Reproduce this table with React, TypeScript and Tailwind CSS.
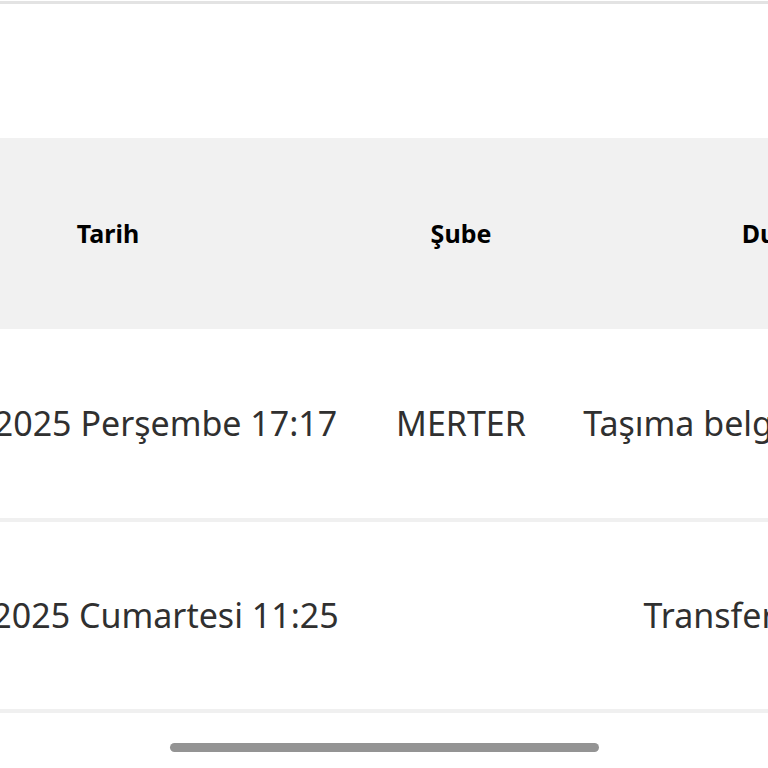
const rows = [
    { date: "10.04.2025 Perşembe 17:17", branch: "MERTER", status: "Taşıma belgesi düzenlendi" },
    { date: "12.04.2025 Cumartesi 11:25", branch: "", status: "Transfer merkezde" },
    { date: "14.04.2025 Pazartesi 09:02", branch: "MERTER", status: "Dağıtıma çıkarıldı" },
];

export default function App() {
    return (
        <div className="relative min-h-[768px] overflow-hidden bg-white font-['Noto_Sans',sans-serif]">
            <div className="mt-px h-[3px] bg-[#e3e3e3]" />

            <div className="mt-[134px] overflow-hidden">
                <table className="-ml-[155px] w-[1174px] table-fixed border-collapse">
                    <colgroup>
                        <col className="w-[526px]" />
                        <col className="w-[180px]" />
                        <col className="w-[468px]" />
                    </colgroup>
                    <thead>
                        <tr className="h-[191px] bg-[#f1f1f1]">
                            <th className="whitespace-nowrap text-center text-[25px] font-bold text-black">Tarih</th>
                            <th className="whitespace-nowrap text-center text-[25px] font-bold text-black">Şube</th>
                            <th className="whitespace-nowrap text-center text-[25px] font-bold text-black">Durum</th>
                        </tr>
                    </thead>
                    <tbody>
                        {rows.map((r) => (
                            <tr key={r.date} className="h-[191px] border-b-4 border-[#f0f0f0]">
                                <td className="whitespace-nowrap pl-[19px] text-center text-[34px] text-[#303030]">{r.date}</td>
                                <td className="whitespace-nowrap text-center text-[34px] text-[#303030]">{r.branch}</td>
                                <td className="whitespace-nowrap pl-[16px] text-center text-[34px] text-[#303030]">{r.status}</td>
                            </tr>
                        ))}
                    </tbody>
                </table>
            </div>

            <div className="absolute left-[170px] top-[743px] h-[9px] w-[429px] rounded-full bg-[#949494]" />
        </div>
    );
}
